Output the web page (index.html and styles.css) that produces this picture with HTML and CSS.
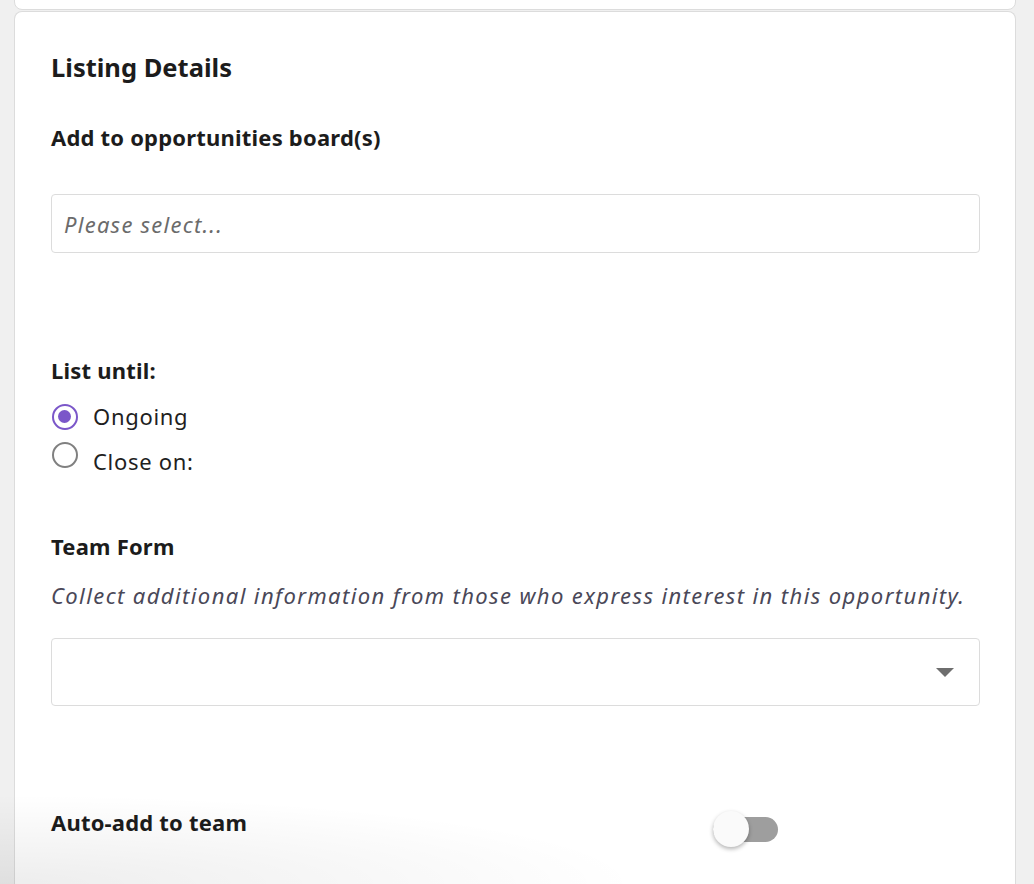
FILE: index.html
```html
<!DOCTYPE html>
<html lang="en">
<head>
<meta charset="utf-8">
<title>Listing Details</title>
<link rel="stylesheet" href="styles.css">
</head>
<body>
<div class="page">
  <div class="card card-prev"></div>
  <section class="card listing">
    <h2 class="card-title">Listing Details</h2>

    <div class="field boards">
      <label class="field-label">Add to opportunities board(s)</label>
      <div class="input">
        <span class="placeholder">Please select...</span>
      </div>
    </div>

    <div class="field list-until">
      <div class="field-label">List until:</div>
      <label class="radio radio-first">
        <span class="radio-dot checked"></span>
        <span class="radio-text">Ongoing</span>
      </label>
      <label class="radio radio-second">
        <span class="radio-dot"></span>
        <span class="radio-text">Close on:</span>
      </label>
    </div>

    <div class="field team-form">
      <div class="field-label">Team Form</div>
      <p class="hint">Collect additional information from those who express interest in this opportunity.</p>
      <div class="select">
        <span class="caret"></span>
      </div>
    </div>

    <div class="toggle-row">
      <div class="field-label">Auto-add to team</div>
      <span class="switch"><span class="knob"></span></span>
    </div>
  </section>
  <div class="fade"></div>
</div>
</body>
</html>
```

FILE: styles.css
```css
html, body {
  margin: 0;
  padding: 0;
  height: 100%;
}

body {
  background: #f0f0f0;
  font-family: "Noto Sans", Lato, sans-serif;
  color: #1f1f1f;
  overflow: hidden;
}

.page {
  position: relative;
  height: 100%;
  padding: 0 18px 0 14px;
  display: flex;
  flex-direction: column;
  gap: 1px;
}

.card {
  background: #fff;
  border: 1px solid #dcdcdc;
  border-radius: 8px;
}

.card-prev {
  margin-top: -20px;
  height: 28px;
  flex: none;
}

.listing {
  flex: 1;
  padding: 37px 35px 0 36px;
  border-bottom: none;
  border-bottom-left-radius: 0;
  border-bottom-right-radius: 0;
}

.card-title {
  margin: 0;
  font-size: 25.5px;
  font-weight: 700;
  line-height: 36px;
  color: #1c1c1c;
}

.field-label {
  display: block;
  font-size: 22px;
  font-weight: 700;
  line-height: 30px;
  letter-spacing: 0.2px;
  color: #1c1c1c;
}

.boards {
  margin-top: 37px;
}

.input {
  box-sizing: border-box;
  margin-top: 42px;
  height: 59px;
  border: 1px solid #dcdcdc;
  border-radius: 4px;
  display: flex;
  align-items: center;
  padding: 0 12px;
}

.placeholder {
  font-style: italic;
  font-size: 22px;
  line-height: 30px;
  letter-spacing: 1.25px;
  color: #6b6b6b;
}

.list-until {
  margin-top: 102px;
}

.radio {
  display: flex;
  align-items: flex-start;
  gap: 15px;
  height: 45px;
}

.radio-first {
  margin-top: 9px;
}

.radio-dot {
  width: 26px;
  height: 26px;
  border: 2.5px solid #808080;
  border-radius: 50%;
  box-sizing: border-box;
  position: relative;
  flex: none;
  margin-left: 1px;
}

.radio-first .radio-dot {
  margin-top: 10px;
}

.radio-second .radio-dot {
  margin-top: 3px;
}

.radio-dot.checked {
  border-color: #7b57c9;
}

.radio-dot.checked::after {
  content: "";
  position: absolute;
  left: 4px;
  top: 4px;
  width: 13px;
  height: 13px;
  border-radius: 50%;
  background: #7b57c9;
}

.radio-text {
  font-size: 22px;
  line-height: 45px;
  letter-spacing: 0.7px;
  color: #1f1f1f;
}

.team-form {
  margin-top: 47px;
}

.hint {
  margin: 19px 0 0;
  font-size: 22px;
  font-style: italic;
  line-height: 30px;
  letter-spacing: 1.4px;
  color: #4a4858;
  white-space: nowrap;
}

.select {
  box-sizing: border-box;
  margin-top: 28px;
  height: 68px;
  border: 1px solid #dcdcdc;
  border-radius: 4px;
  display: flex;
  align-items: center;
  justify-content: flex-end;
  padding-right: 25px;
}

.caret {
  width: 0;
  height: 0;
  border-left: 9px solid transparent;
  border-right: 9px solid transparent;
  border-top: 9px solid #6e6e6e;
  margin-top: 1px;
}

.toggle-row {
  margin-top: 101px;
  display: flex;
  align-items: flex-start;
}

.toggle-row .field-label {
  width: 662px;
  flex: none;
}

.switch {
  position: relative;
  width: 65px;
  height: 25px;
  border-radius: 13px;
  background: #9e9e9e;
  margin-top: 10px;
}

.knob {
  position: absolute;
  left: 0;
  top: -6px;
  width: 36px;
  height: 36px;
  border-radius: 50%;
  background: #fafafa;
  box-shadow: 0 2px 4px rgba(0, 0, 0, 0.3);
}

.fade {
  position: absolute;
  left: 0;
  bottom: 0;
  width: 720px;
  height: 110px;
  pointer-events: none;
  background: radial-gradient(ellipse 640px 90px at 0 110px, rgba(0, 0, 0, 0.07), rgba(0, 0, 0, 0));
}
```
